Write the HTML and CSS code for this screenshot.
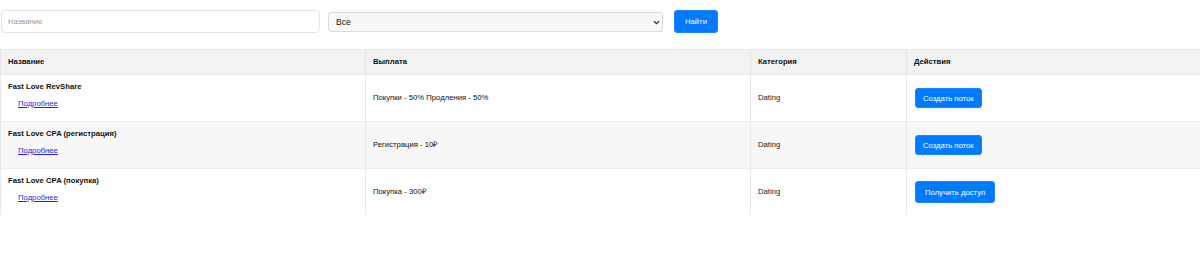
FILE: index.html
```html
<!DOCTYPE html>
<html lang="ru">
<head>
<meta charset="utf-8">
<title>Офферы</title>
<link rel="stylesheet" href="styles.css">
</head>
<body>
<div class="page">
  <form class="filters">
    <input class="search" type="text" placeholder="Название">
    <div class="select-wrap">
      <select class="category">
        <option>Все</option>
      </select>
      <svg class="chev" width="7" height="5" viewBox="0 0 7 5" aria-hidden="true"><path d="M1 1.2 L3.5 3.6 L6 1.2" fill="none" stroke="#333" stroke-width="1.3"/></svg>
    </div>
    <button class="btn btn-find" type="button">Найти</button>
  </form>
  <table class="offers">
    <colgroup>
      <col class="c-name"><col class="c-pay"><col class="c-cat"><col class="c-act">
    </colgroup>
    <thead>
      <tr>
        <th>Название</th>
        <th>Выплата</th>
        <th>Категория</th>
        <th>Действия</th>
      </tr>
    </thead>
    <tbody>
      <tr>
        <td class="name-cell">
          <div class="offer-name">Fast Love RevShare</div>
          <div class="more"><a href="#">Подробнее</a></div>
        </td>
        <td>Покупки - 50% Продления - 50%</td>
        <td class="cat">Dating</td>
        <td class="act"><button class="btn btn-sm" type="button">Создать поток</button></td>
      </tr>
      <tr class="alt">
        <td class="name-cell">
          <div class="offer-name">Fast Love CPA (регистрация)</div>
          <div class="more"><a href="#">Подробнее</a></div>
        </td>
        <td>Регистрация - 10₽</td>
        <td class="cat">Dating</td>
        <td class="act"><button class="btn btn-sm" type="button">Создать поток</button></td>
      </tr>
      <tr>
        <td class="name-cell">
          <div class="offer-name">Fast Love CPA (покупка)</div>
          <div class="more"><a href="#">Подробнее</a></div>
        </td>
        <td>Покупка - 300₽</td>
        <td class="cat">Dating</td>
        <td class="act"><button class="btn btn-access" type="button">Получить доступ</button></td>
      </tr>
    </tbody>
  </table>
</div>
</body>
</html>
```

FILE: styles.css
```css
* { box-sizing: border-box; }

body {
  margin: 0;
  background: #fff;
  font-family: "Liberation Sans", Arial, sans-serif;
  font-size: 7.7px;
  color: #111;
}

.page {
  padding-top: 10px;
}

.filters {
  display: flex;
  align-items: center;
  height: 23px;
  padding-left: 1px;
  gap: 8px;
  margin: 0;
}

.search {
  width: 319px;
  height: 23px;
  border: 1px solid #e4e4e4;
  border-radius: 4px;
  padding: 0 6px;
  font-family: inherit;
  font-size: 7.7px;
  color: #111;
  outline: none;
}
.search::placeholder { color: #9a9a9a; }

.select-wrap {
  position: relative;
  display: flex;
}

.category {
  -webkit-appearance: none;
  appearance: none;
  width: 335px;
  height: 20px;
  border: 1px solid #dcdcdc;
  border-radius: 3px;
  background: #f8f8f8;
  padding: 0 7px;
  font-family: inherit;
  font-size: 8.6px;
  color: #111;
}

.chev {
  position: absolute;
  right: 3px;
  top: 8px;
  pointer-events: none;
}

.btn {
  border: 1px solid #1a86ff;
  background: #007bff;
  color: #fff;
  font-family: inherit;
  font-size: 7.7px;
  border-radius: 3px;
  cursor: pointer;
}

.btn-find {
  margin-left: 3px;
  height: 23px;
  padding: 0 10px;
}

.offers {
  margin-top: 16px;
  width: 1200px;
  border-collapse: collapse;
  table-layout: fixed;
}

.c-name { width: 365px; }
.c-pay { width: 385px; }
.c-cat { width: 156px; }
.c-act { width: 294px; }

.offers th {
  background: #f2f2f2;
  font-weight: bold;
  text-align: left;
  padding: 7px 7px;
  line-height: 10px;
  border-top: 1px solid #e6e6e6;
  border-bottom: 1px solid #e6e6e6;
  border-left: 1px solid #e6e6e6;
}

.offers td {
  padding: 6px 7px;
  vertical-align: middle;
  line-height: 12px;
  border-left: 1px solid #e9e9e9;
  border-bottom: 1px solid #ececec;
}

.offers tbody tr:last-child td { border-bottom: none; }

.offers tr.alt td { background: #f7f7f7; }

.offer-name {
  font-weight: bold;
  line-height: 12px;
}

.more {
  margin: 5px 0 5px 10px;
}
.more a {
  color: #2a1ff0;
  text-decoration: underline;
}

.cat { color: #222; }

.offers td.act { padding-left: 8px; }

.btn-sm {
  height: 20px;
  padding: 0 7px;
}

.btn-access {
  height: 22px;
  padding: 0 9px;
}
```
